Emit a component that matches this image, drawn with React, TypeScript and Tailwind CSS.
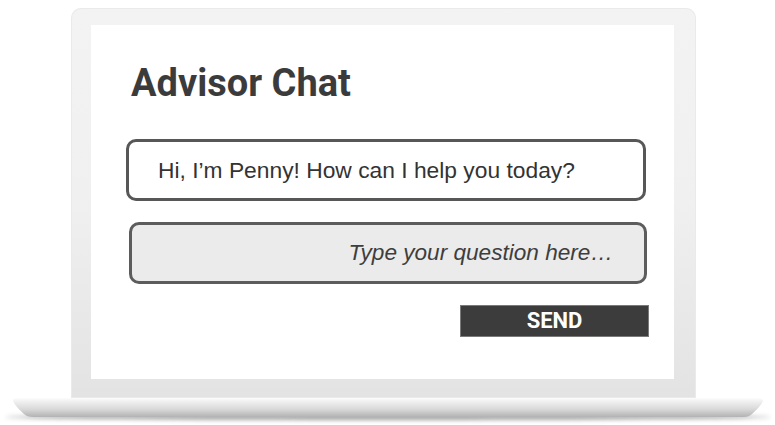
export default function App() {
  return (
    <div className="w-[775px] h-[425px] bg-white overflow-hidden flex flex-col">
      {/* Lid */}
      <div className="ml-[71px] mt-[8px] w-[625px] h-[390px] rounded-t-[10px] bg-gradient-to-b from-[#f3f3f3] via-[#f0f0f0] to-[#e3e3e3] pt-[17px] pl-[20px] shadow-[inset_0_0_0_1px_#eaeaea]">
        {/* Screen */}
        <div className="w-[583px] h-[354px] bg-white flex flex-col pl-[35px] pt-[39px]">
          <h1
            className="h-[38px] leading-[38px] text-[38px] font-bold text-[#3b3b3b] ml-[5px]"
            style={{ fontFamily: 'Roboto, sans-serif' }}
          >
            Advisor Chat
          </h1>

          <div className="mt-[37px] w-[520px] h-[62px] rounded-[10px] border-[3px] border-[#575757] flex items-center pl-[29px]">
            <span
              className="text-[22.8px] text-[#333333]"
              style={{ fontFamily: '"Liberation Sans", Arial, sans-serif' }}
            >
              Hi, I’m Penny! How can I help you today?
            </span>
          </div>

          <div className="mt-[21px] ml-[3px] w-[518px] h-[62px] rounded-[10px] border-[3px] border-[#5c5c5c] bg-[#ebebeb] flex items-center justify-end pr-[31px]">
            <span
              className="text-[22.6px] italic text-[#3e3e3e]"
              style={{ fontFamily: '"Liberation Sans", Arial, sans-serif' }}
            >
              Type your question here…
            </span>
          </div>

          <button
            className="mt-[21px] ml-[334px] w-[189px] h-[32px] bg-[#3c3c3c] border border-[#7a7a7a] flex items-center justify-center text-white text-[22px] font-bold leading-none"
            style={{ fontFamily: 'Roboto, sans-serif' }}
          >
            SEND
          </button>
        </div>
      </div>

      {/* Base */}
      <svg width="775" height="27" viewBox="0 0 775 27" className="block">
        <defs>
          <linearGradient id="baseFill" x1="0" y1="0" x2="0" y2="1">
            <stop offset="0" stopColor="#fcfcfc" />
            <stop offset="0.2" stopColor="#efefef" />
            <stop offset="0.6" stopColor="#d8d8d8" />
            <stop offset="1" stopColor="#b2b2b2" />
          </linearGradient>
          <filter id="blur" x="-10%" y="-200%" width="120%" height="500%">
            <feGaussianBlur stdDeviation="2" />
          </filter>
        </defs>
        <ellipse cx="388" cy="19" rx="383" ry="3" fill="#7e7e7e" opacity="0.7" filter="url(#blur)" />
        <path
          d="M18 0 H757 Q763 0 763 3 Q761 8 752 16 Q749 19 744 19 H33 Q27 19 24 16 Q15 8 13 3 Q13 0 18 0 Z"
          fill="url(#baseFill)"
        />
      </svg>
    </div>
  );
}
